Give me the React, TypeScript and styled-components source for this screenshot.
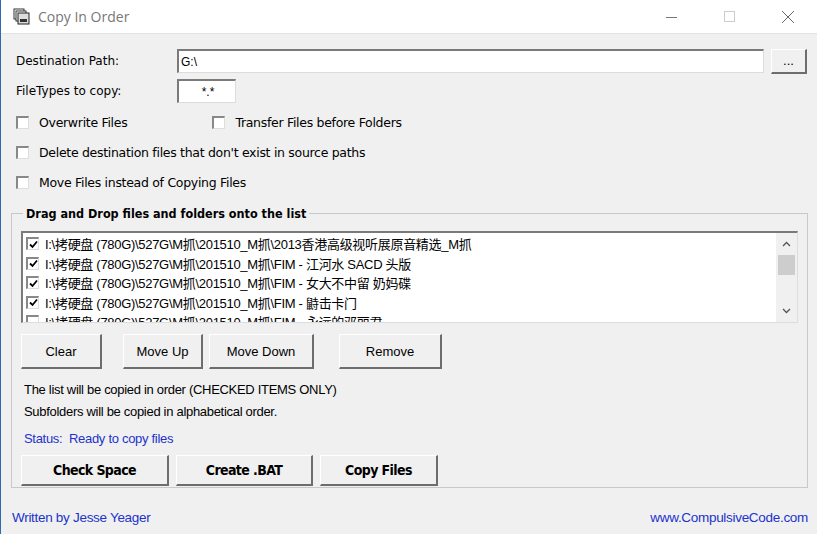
import React from "react";
import styled, { createGlobalStyle } from "styled-components";

const Global = createGlobalStyle`
  html, body { margin: 0; padding: 0; background: #f0f0f0; }
  body { font-family: "Liberation Sans", Arial, "Noto Sans CJK SC", sans-serif; font-size: 13px; color: #000; }
`;

const Win = styled.div`
  width: 817px; height: 534px; box-sizing: border-box;
  border-left: 1px solid #2b6cb0; background: #f0f0f0;
  display: flex; flex-direction: column;
`;
const TitleBar = styled.div`
  height: 34px; background: #fff; display: flex; align-items: center;
  border-bottom: 1px solid #e3e3e3; box-sizing: border-box;
`;
const Title = styled.div`
  font-family: "Open Sans", "Noto Sans", sans-serif; font-size: 14px; color: #777;
  margin-left: 8px; flex: 1;
`;
const Ctl = styled.div`
  width: 58px; height: 34px; display: flex; align-items: center; justify-content: center;
`;
const Body = styled.div`
  display: flex; flex-direction: column; padding: 14px 10px 0 15px;
`;
const Row = styled.div<{ $h: number; $mt?: number }>`
  display: flex; align-items: center; height: ${p => p.$h}px; margin-top: ${p => p.$mt ?? 0}px;
`;
const Label = styled.div`
  width: 161px; font-family: "DejaVu Sans", sans-serif; font-size: 12px;
`;
const Input = styled.div<{ $w: number; $center?: boolean }>`
  width: ${p => p.$w}px; height: 24px; box-sizing: border-box; background: #fff;
  border-top: 2px solid #7a7a7a; border-left: 2px solid #7a7a7a;
  border-right: 1px solid #dcdcdc; border-bottom: 1px solid #dcdcdc;
  display: flex; align-items: center; justify-content: ${p => (p.$center ? "center" : "flex-start")};
  padding-left: 2px; font-size: 12px;
`;
const Btn = styled.div<{ $w: number; $h: number; $bold?: boolean; $ml?: number }>`
  width: ${p => p.$w}px; height: ${p => p.$h}px; box-sizing: border-box; margin-left: ${p => p.$ml ?? 0}px;
  background: #f0f0f0; border-top: 1px solid #fff; border-left: 1px solid #fff;
  border-right: 2px solid #6d6d6d; border-bottom: 2px solid #6d6d6d;
  display: flex; align-items: center; justify-content: center;
  font-family: ${p => (p.$bold ? '"DejaVu Sans Condensed", sans-serif' : '"Liberation Sans", sans-serif')};
  font-weight: ${p => (p.$bold ? 700 : 400)}; font-size: ${p => (p.$bold ? 14 : 13)}px;
  letter-spacing: ${p => (p.$bold ? "-0.6px" : "0")};
`;
const Check = styled.span`
  width: 13px; height: 13px; box-sizing: border-box; background: #fff;
  border-top: 2px solid #888; border-left: 2px solid #888; border-right: 1px solid #ddd; border-bottom: 1px solid #ddd;
  display: inline-flex; align-items: center; justify-content: center; flex-shrink: 0;
`;
const CheckText = styled.span`
  margin-left: 10px; font-family: "DejaVu Sans", sans-serif; font-size: 12.5px; letter-spacing: -0.3px;
`;
const Group = styled.fieldset`
  margin: 14px 0 0 -5px; width: 797px; height: 282px; box-sizing: border-box;
  border: 1px solid #c8c8c8; padding: 0 9px 0 9px;
  display: flex; flex-direction: column;
`;
const Legend = styled.legend`
  font-family: "DejaVu Sans Condensed", sans-serif; font-weight: 700; font-size: 12.5px; padding: 0 3px; margin-left: 2px;
`;
const ListBox = styled.div`
  height: 92px; margin-top: 10px; background: #fff; box-sizing: border-box;
  border-top: 2px solid #7a7a7a; border-left: 2px solid #7a7a7a; border-right: 1px solid #ddd; border-bottom: 1px solid #ddd;
  display: flex; overflow: hidden;
`;
const Items = styled.div` flex: 1; padding-top: 1px; `;
const Item = styled.div`
  height: 19.5px; display: flex; align-items: center; padding-left: 3px; white-space: nowrap;
  font-family: "Liberation Sans Narrow", "Liberation Sans", "Noto Sans CJK SC", sans-serif; font-size: 13px;
`;
const ItemText = styled.span` margin-left: 6px; letter-spacing: -0.3px; `;
const Scroll = styled.div`
  width: 21px; display: flex; flex-direction: column; background: #f0f0f0;
`;
const Arrow = styled.div` height: 22px; display: flex; align-items: center; justify-content: center; `;
const Thumb = styled.div` height: 20px; background: #cdcdcd; margin: 0 2px; `;
const Spacer = styled.div` flex: 1; `;
const Info = styled.div<{ $mt: number; $blue?: boolean }>`
  margin-top: ${p => p.$mt}px; margin-left: 3px; font-family: "Liberation Sans Narrow", "Liberation Sans", sans-serif;
  font-size: 13px; letter-spacing: -0.3px; color: ${p => (p.$blue ? "#2233cc" : "#000")};
`;
const Footer = styled.div`
  display: flex; justify-content: space-between; margin-top: 22px; padding: 0 9px 0 11px;
  font-family: "Liberation Sans Narrow", "Liberation Sans", sans-serif; font-size: 13.5px; letter-spacing: -0.3px; color: #2233cc;
`;

const Tick = () => (
  <svg width="9" height="9" viewBox="0 0 9 9"><path d="M1 4.5 L3.5 7 L8 1.5" fill="none" stroke="#000" strokeWidth="1.8" /></svg>
);

const items = [
  "I:\\拷硬盘 (780G)\\527G\\M抓\\201510_M抓\\2013香港高级视听展原音精选_M抓",
  "I:\\拷硬盘 (780G)\\527G\\M抓\\201510_M抓\\FIM - 江河水  SACD 头版",
  "I:\\拷硬盘 (780G)\\527G\\M抓\\201510_M抓\\FIM - 女大不中留 奶妈碟",
  "I:\\拷硬盘 (780G)\\527G\\M抓\\201510_M抓\\FIM - 鼭击卡门",
  "I:\\拷硬盘 (780G)\\527G\\M抓\\201510_M抓\\FIM - 永远的邓丽君",
];

export default function App() {
  return (
    <>
      <Global />
      <Win>
        <TitleBar>
          <svg width="17" height="17" viewBox="0 0 17 17" style={{ marginLeft: 12 }}>
            <rect x="1" y="1" width="10" height="10" fill="#fff" stroke="#333" />
            <rect x="3" y="3" width="10" height="10" fill="#fff" stroke="#333" />
            <rect x="5" y="5" width="11" height="11" fill="#ddd" stroke="#222" />
            <rect x="7" y="11" width="7" height="3" fill="#333" />
          </svg>
          <Title>Copy In Order</Title>
          <Ctl><svg width="12" height="12"><path d="M0 6.5 H11" stroke="#777" /></svg></Ctl>
          <Ctl><svg width="12" height="12"><rect x="0.5" y="0.5" width="10" height="10" fill="none" stroke="#ccc" /></svg></Ctl>
          <Ctl><svg width="14" height="14"><path d="M1 1 L13 13 M13 1 L1 13" stroke="#666" /></svg></Ctl>
        </TitleBar>
        <Body>
          <Row $h={26}>
            <Label>Destination Path:</Label>
            <Input $w={587}>G:\</Input>
            <Btn $w={36} $h={25} $ml={7}>...</Btn>
          </Row>
          <Row $h={22} $mt={6}>
            <Label>FileTypes to copy:</Label>
            <Input $w={59} $center>*.*</Input>
          </Row>
          <Row $h={20} $mt={10}>
            <Check /><CheckText>Overwrite Files</CheckText>
            <Check style={{ marginLeft: 85 }} /><CheckText>Transfer Files before Folders</CheckText>
          </Row>
          <Row $h={20} $mt={10}>
            <Check /><CheckText>Delete destination files that don't exist in source paths</CheckText>
          </Row>
          <Row $h={20} $mt={10}>
            <Check /><CheckText>Move Files instead of Copying Files</CheckText>
          </Row>
          <Group>
            <Legend>Drag and Drop files and folders onto the list</Legend>
            <ListBox>
              <Items>
                {items.map((t, i) => (
                  <Item key={i}><Check>{i < 4 && <Tick />}</Check><ItemText>{t}</ItemText></Item>
                ))}
              </Items>
              <Scroll>
                <Arrow><svg width="9" height="6"><path d="M1 5 L4.5 1.5 L8 5" fill="none" stroke="#555" strokeWidth="1.3" /></svg></Arrow>
                <Thumb />
                <Spacer />
                <Arrow><svg width="9" height="6"><path d="M1 1 L4.5 4.5 L8 1" fill="none" stroke="#555" strokeWidth="1.3" /></svg></Arrow>
              </Scroll>
            </ListBox>
            <Row $h={35} $mt={11}>
              <Btn $w={81} $h={35}>Clear</Btn>
              <Btn $w={80} $h={35} $ml={21}>Move Up</Btn>
              <Btn $w={105} $h={35} $ml={6}>Move Down</Btn>
              <Btn $w={103} $h={35} $ml={25}>Remove</Btn>
            </Row>
            <Info $mt={13}>The list will be copied in order (CHECKED ITEMS ONLY)</Info>
            <Info $mt={7}>Subfolders will be copied in alphabetical order.</Info>
            <Info $mt={12} $blue>Status:&nbsp; Ready to copy files</Info>
            <Row $h={31} $mt={9}>
              <Btn $w={148} $h={31} $bold>Check Space</Btn>
              <Btn $w={137} $h={31} $bold $ml={7}>Create .BAT</Btn>
              <Btn $w={118} $h={31} $bold $ml={7}>Copy Files</Btn>
            </Row>
          </Group>
        </Body>
        <Footer><span>Written by Jesse Yeager</span><span>www.CompulsiveCode.com</span></Footer>
      </Win>
    </>
  );
}
